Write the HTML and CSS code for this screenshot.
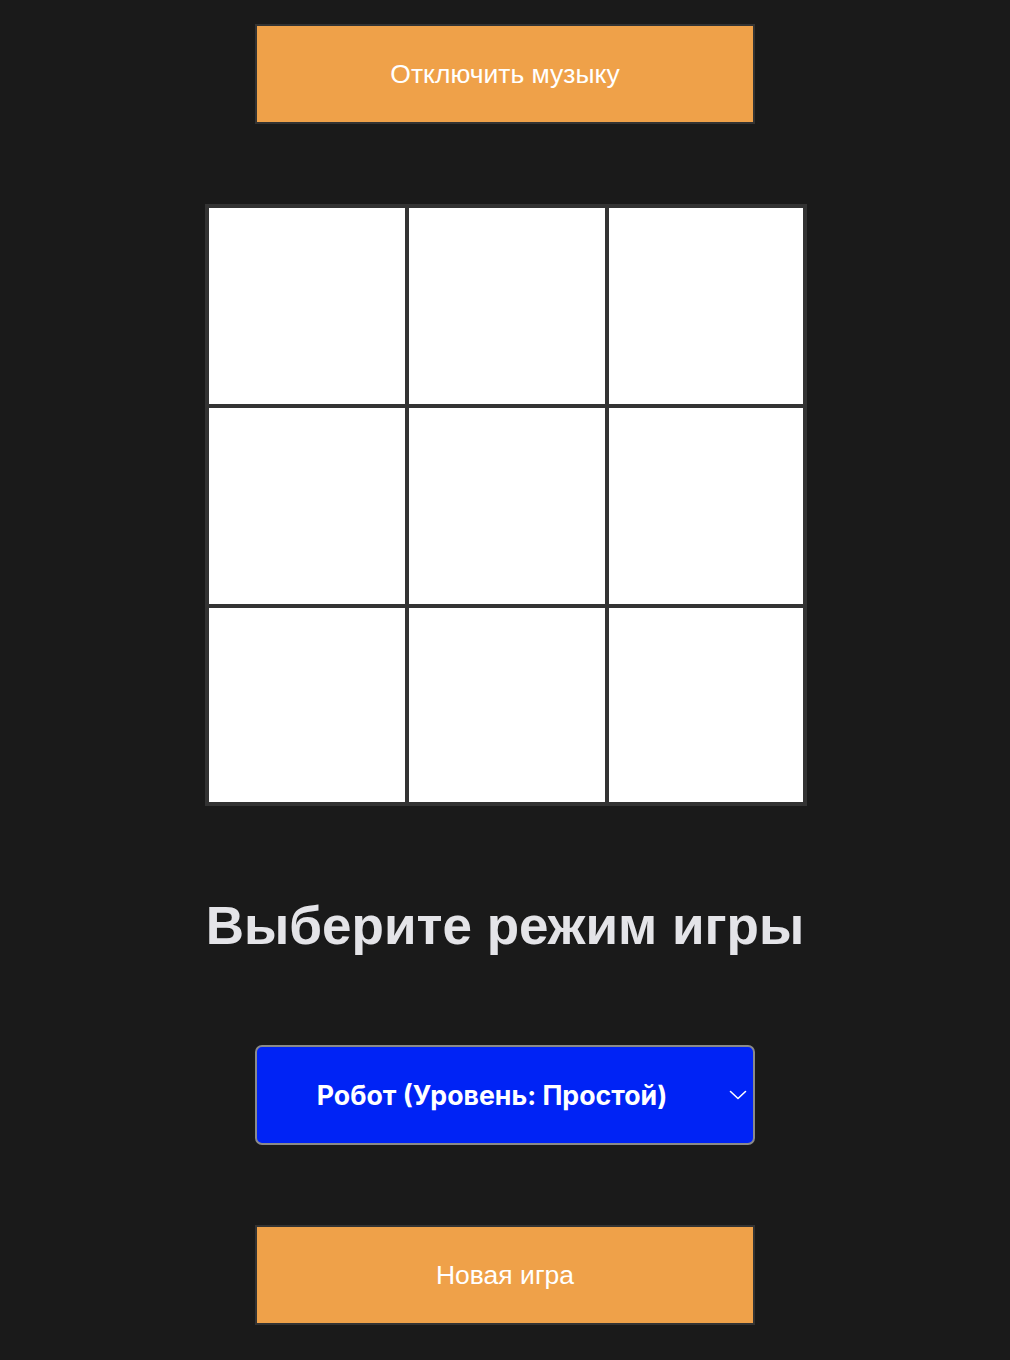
FILE: index.html
```html
<!DOCTYPE html>
<html lang="ru">
<head>
<meta charset="utf-8">
<title>Крестики-нолики</title>
<link rel="stylesheet" href="styles.css">
</head>
<body>
<main class="app">
  <button class="btn btn-music" type="button">Отключить музыку</button>
  <div class="board-wrap">
    <div class="board">
      <div class="cell"></div><div class="cell"></div><div class="cell"></div>
      <div class="cell"></div><div class="cell"></div><div class="cell"></div>
      <div class="cell"></div><div class="cell"></div><div class="cell"></div>
    </div>
  </div>
  <h1 class="title">Выберите режим игры</h1>
  <div class="mode">
    <select class="mode-select">
      <option>Робот (Уровень: Простой)</option>
      <option>Робот (Уровень: Сложный)</option>
      <option>Два игрока</option>
    </select>
    <svg class="chevron" width="18" height="10" viewBox="0 0 18 10" aria-hidden="true">
      <path d="M1.5 1.5 L9 8.5 L16.5 1.5" fill="none" stroke="#ffffff" stroke-width="1.6" stroke-linecap="round" stroke-linejoin="round"/>
    </svg>
  </div>
  <button class="btn btn-new" type="button">Новая игра</button>
</main>
</body>
</html>
```
FILE: styles.css
```css
html, body {
  margin: 0;
  padding: 0;
  background: #1a1a1a;
}

.app {
  display: flex;
  flex-direction: column;
  align-items: center;
  padding-top: 24px;
  font-family: "Liberation Sans", Arial, sans-serif;
}

.btn {
  box-sizing: border-box;
  width: 500px;
  height: 100px;
  border: 2px solid #333333;
  background: #efa149;
  color: #ffffff;
  font-family: "Liberation Sans", Arial, sans-serif;
  font-size: 26.5px;
  padding: 0;
  cursor: pointer;
}

.board-wrap {
  width: 600px;
  margin-top: 80px;
}

.board {
  display: grid;
  grid-template-columns: 196px 196px 194px;
  grid-template-rows: 196px 196px 194px;
  gap: 4px;
  padding: 4px;
  width: max-content;
  background: #333333;
}

.cell {
  background: #ffffff;
}

.title {
  margin: 90px 0 89px;
  font-family: "Liberation Sans", Arial, sans-serif;
  font-weight: 700;
  font-size: 53px;
  line-height: 60px;
  color: #e4e4e8;
}

.mode {
  position: relative;
  width: 500px;
  height: 100px;
}

.mode-select {
  box-sizing: border-box;
  width: 100%;
  height: 100%;
  appearance: none;
  -webkit-appearance: none;
  background: #0023f5;
  color: #ffffff;
  border: 2px solid #8a8a8a;
  border-radius: 7px;
  padding: 0 40px 0 14px;
  font-family: Inter, "Noto Sans", sans-serif;
  font-weight: 700;
  font-size: 26.7px;
  text-align: center;
  text-align-last: center;
  outline: none;
}

.chevron {
  position: absolute;
  right: 8px;
  top: 45px;
  pointer-events: none;
}

.btn-new {
  margin-top: 80px;
}
```
